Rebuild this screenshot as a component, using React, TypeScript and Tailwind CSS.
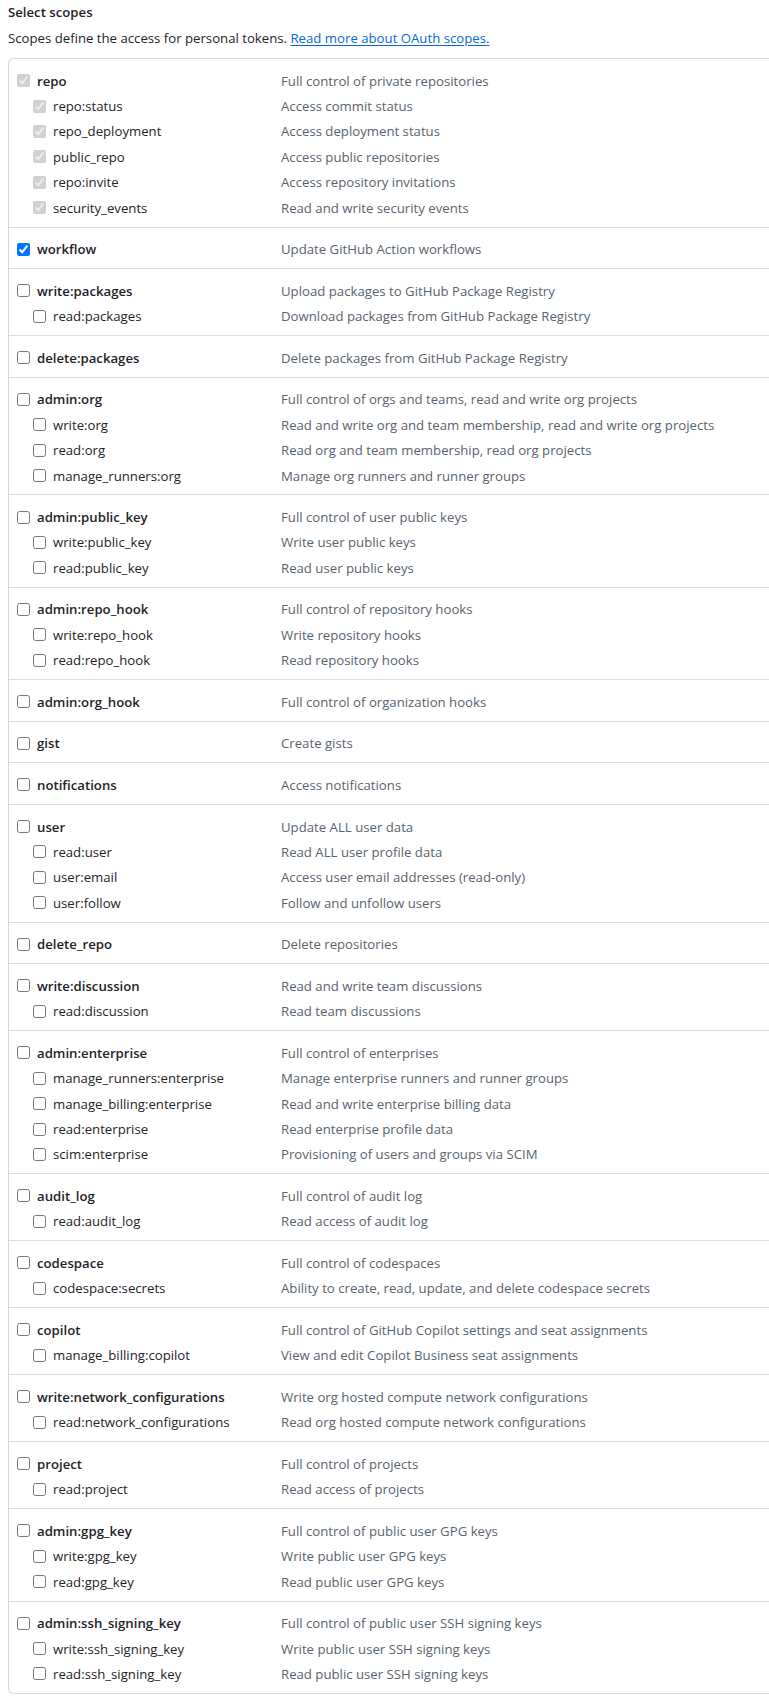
import React from "react";

interface Scope {
  name: string;
  description: string;
}

interface ScopeGroup {
  parent: Scope;
  children?: Scope[];
  checked?: boolean;
  disabled?: boolean;
}

const scopeGroups: ScopeGroup[] = [
  {
    parent: { name: "repo", description: "Full control of private repositories" },
    checked: true,
    disabled: true,
    children: [
      { name: "repo:status", description: "Access commit status" },
      { name: "repo_deployment", description: "Access deployment status" },
      { name: "public_repo", description: "Access public repositories" },
      { name: "repo:invite", description: "Access repository invitations" },
      { name: "security_events", description: "Read and write security events" },
    ],
  },
  {
    parent: { name: "workflow", description: "Update GitHub Action workflows" },
    checked: true,
  },
  {
    parent: { name: "write:packages", description: "Upload packages to GitHub Package Registry" },
    children: [{ name: "read:packages", description: "Download packages from GitHub Package Registry" }],
  },
  {
    parent: { name: "delete:packages", description: "Delete packages from GitHub Package Registry" },
  },
  {
    parent: { name: "admin:org", description: "Full control of orgs and teams, read and write org projects" },
    children: [
      { name: "write:org", description: "Read and write org and team membership, read and write org projects" },
      { name: "read:org", description: "Read org and team membership, read org projects" },
      { name: "manage_runners:org", description: "Manage org runners and runner groups" },
    ],
  },
  {
    parent: { name: "admin:public_key", description: "Full control of user public keys" },
    children: [
      { name: "write:public_key", description: "Write user public keys" },
      { name: "read:public_key", description: "Read user public keys" },
    ],
  },
  {
    parent: { name: "admin:repo_hook", description: "Full control of repository hooks" },
    children: [
      { name: "write:repo_hook", description: "Write repository hooks" },
      { name: "read:repo_hook", description: "Read repository hooks" },
    ],
  },
  {
    parent: { name: "admin:org_hook", description: "Full control of organization hooks" },
  },
  {
    parent: { name: "gist", description: "Create gists" },
  },
  {
    parent: { name: "notifications", description: "Access notifications" },
  },
  {
    parent: { name: "user", description: "Update ALL user data" },
    children: [
      { name: "read:user", description: "Read ALL user profile data" },
      { name: "user:email", description: "Access user email addresses (read-only)" },
      { name: "user:follow", description: "Follow and unfollow users" },
    ],
  },
  {
    parent: { name: "delete_repo", description: "Delete repositories" },
  },
  {
    parent: { name: "write:discussion", description: "Read and write team discussions" },
    children: [{ name: "read:discussion", description: "Read team discussions" }],
  },
  {
    parent: { name: "admin:enterprise", description: "Full control of enterprises" },
    children: [
      { name: "manage_runners:enterprise", description: "Manage enterprise runners and runner groups" },
      { name: "manage_billing:enterprise", description: "Read and write enterprise billing data" },
      { name: "read:enterprise", description: "Read enterprise profile data" },
      { name: "scim:enterprise", description: "Provisioning of users and groups via SCIM" },
    ],
  },
  {
    parent: { name: "audit_log", description: "Full control of audit log" },
    children: [{ name: "read:audit_log", description: "Read access of audit log" }],
  },
  {
    parent: { name: "codespace", description: "Full control of codespaces" },
    children: [
      { name: "codespace:secrets", description: "Ability to create, read, update, and delete codespace secrets" },
    ],
  },
  {
    parent: { name: "copilot", description: "Full control of GitHub Copilot settings and seat assignments" },
    children: [
      { name: "manage_billing:copilot", description: "View and edit Copilot Business seat assignments" },
    ],
  },
  {
    parent: { name: "write:network_configurations", description: "Write org hosted compute network configurations" },
    children: [
      { name: "read:network_configurations", description: "Read org hosted compute network configurations" },
    ],
  },
  {
    parent: { name: "project", description: "Full control of projects" },
    children: [{ name: "read:project", description: "Read access of projects" }],
  },
  {
    parent: { name: "admin:gpg_key", description: "Full control of public user GPG keys" },
    children: [
      { name: "write:gpg_key", description: "Write public user GPG keys" },
      { name: "read:gpg_key", description: "Read public user GPG keys" },
    ],
  },
  {
    parent: { name: "admin:ssh_signing_key", description: "Full control of public user SSH signing keys" },
    children: [
      { name: "write:ssh_signing_key", description: "Write public user SSH signing keys" },
      { name: "read:ssh_signing_key", description: "Read public user SSH signing keys" },
    ],
  },
];

interface ScopeRowProps {
  scope: Scope;
  nested?: boolean;
  checked?: boolean;
  disabled?: boolean;
}

const ScopeRow: React.FC<ScopeRowProps> = ({ scope, nested, checked, disabled }) => {
  return (
    <div className="flex items-center h-[25.4px]">
      <label className={`flex items-center w-[272px] shrink-0 ${nested ? "pl-[24px]" : "pl-[8px]"}`}>
        <input
          type="checkbox"
          className="m-0 w-[13px] h-[13px] shrink-0"
          defaultChecked={checked}
          disabled={disabled}
        />
        <span className={`ml-[7px] text-[#1f2328] ${nested ? "font-normal" : "font-semibold"}`}>{scope.name}</span>
      </label>
      <span className="text-[#59636e] whitespace-nowrap">{scope.description}</span>
    </div>
  );
};

export default function App() {
  return (
    <div
      className="w-full overflow-hidden bg-white pl-[8px] text-[13.2px] leading-[24px]"
      style={{ fontFamily: '"Open Sans", "Noto Sans", sans-serif' }}
    >
      <h3 className="font-semibold text-[#1f2328] leading-[24px]">Select scopes</h3>
      <p className="mt-[2px] text-[#1f2328]">
        Scopes define the access for personal tokens.{" "}
        <a href="#" className="text-[#0969da] underline underline-offset-2">
          Read more about OAuth scopes.
        </a>
      </p>
      <div className="mt-[8px] border border-r-0 border-[#d1d9e0] rounded-l-md">
        {scopeGroups.map((group, i) => (
          <div
            key={group.parent.name}
            className={`pt-[9px] pb-[6.2px] ${i > 0 ? "border-t border-[#d8dee4]" : ""}`}
          >
            <ScopeRow scope={group.parent} checked={group.checked} disabled={group.disabled} />
            {group.children?.map((child) => (
              <ScopeRow
                key={child.name}
                scope={child}
                nested
                checked={group.checked}
                disabled={group.disabled}
              />
            ))}
          </div>
        ))}
      </div>
    </div>
  );
}
